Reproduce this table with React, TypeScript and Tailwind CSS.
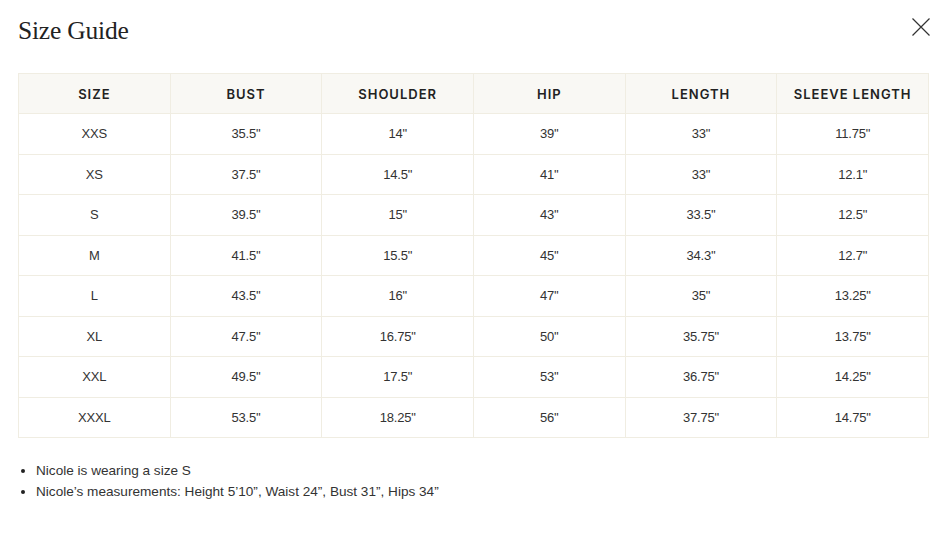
import React from 'react';

const headers = ['Size', 'Bust', 'Shoulder', 'Hip', 'Length', 'Sleeve Length'];

const rows: string[][] = [
  ['XXS', '35.5"', '14"', "39''", '33"', '11.75"'],
  ['XS', '37.5"', '14.5"', "41''", '33"', '12.1"'],
  ['S', "39.5''", '15"', "43''", "33.5''", '12.5"'],
  ['M', "41.5''", '15.5"', "45''", "34.3''", '12.7"'],
  ['L', "43.5''", '16"', "47''", '35"', '13.25"'],
  ['XL', "47.5''", '16.75"', "50''", '35.75"', '13.75"'],
  ['XXL', "49.5''", '17.5"', "53''", '36.75"', '14.25"'],
  ['XXXL', "53.5''", '18.25"', "56''", '37.75"', '14.75"'],
];

const App: React.FC = () => {
  return (
    <div className="w-[950px] h-[537px] bg-white px-[18px] pt-[14px] font-['Liberation_Sans',Arial,sans-serif] text-[#333]">
      <div className="flex items-start justify-between">
        <h1 className="font-['Liberation_Serif',serif] text-[25.5px] leading-[34px] text-[#222] tracking-[-0.2px]">
          Size Guide
        </h1>
        <button className="mt-[4px] mr-[2px] w-[18px] h-[18px]" aria-label="Close">
          <svg viewBox="0 0 18 18" width="18" height="18" fill="none" stroke="#333" strokeWidth="1.2">
            <path d="M0.5 0.5 L17.5 17.5 M17.5 0.5 L0.5 17.5" />
          </svg>
        </button>
      </div>

      <table className="mt-[25px] w-[911px] border-collapse table-fixed">
        <thead>
          <tr className="bg-[#f9f8f4]">
            {headers.map((h) => (
              <th
                key={h}
                className="h-[40px] border border-[#f0ede2] text-[13px] font-semibold uppercase tracking-[1px] text-[#222] text-center align-middle pt-[2px] font-['Inter',sans-serif]"
              >
                {h}
              </th>
            ))}
          </tr>
        </thead>
        <tbody>
          {rows.map((r) => (
            <tr key={r[0]}>
              {r.map((c, i) => (
                <td
                  key={i}
                  className="h-[40.5px] border border-[#f0ede2] text-[13px] text-center align-middle text-[#333] tracking-[-0.2px]"
                >
                  {c}
                </td>
              ))}
            </tr>
          ))}
        </tbody>
      </table>

      <ul className="mt-[22px] pl-[18px] list-disc text-[13.6px] leading-[21px] text-[#333] marker:text-[#222]">
        <li>Nicole is wearing a size S</li>
        <li>Nicole’s measurements: Height 5’10”, Waist 24”, Bust 31”, Hips 34”</li>
      </ul>
    </div>
  );
};

export default App;
